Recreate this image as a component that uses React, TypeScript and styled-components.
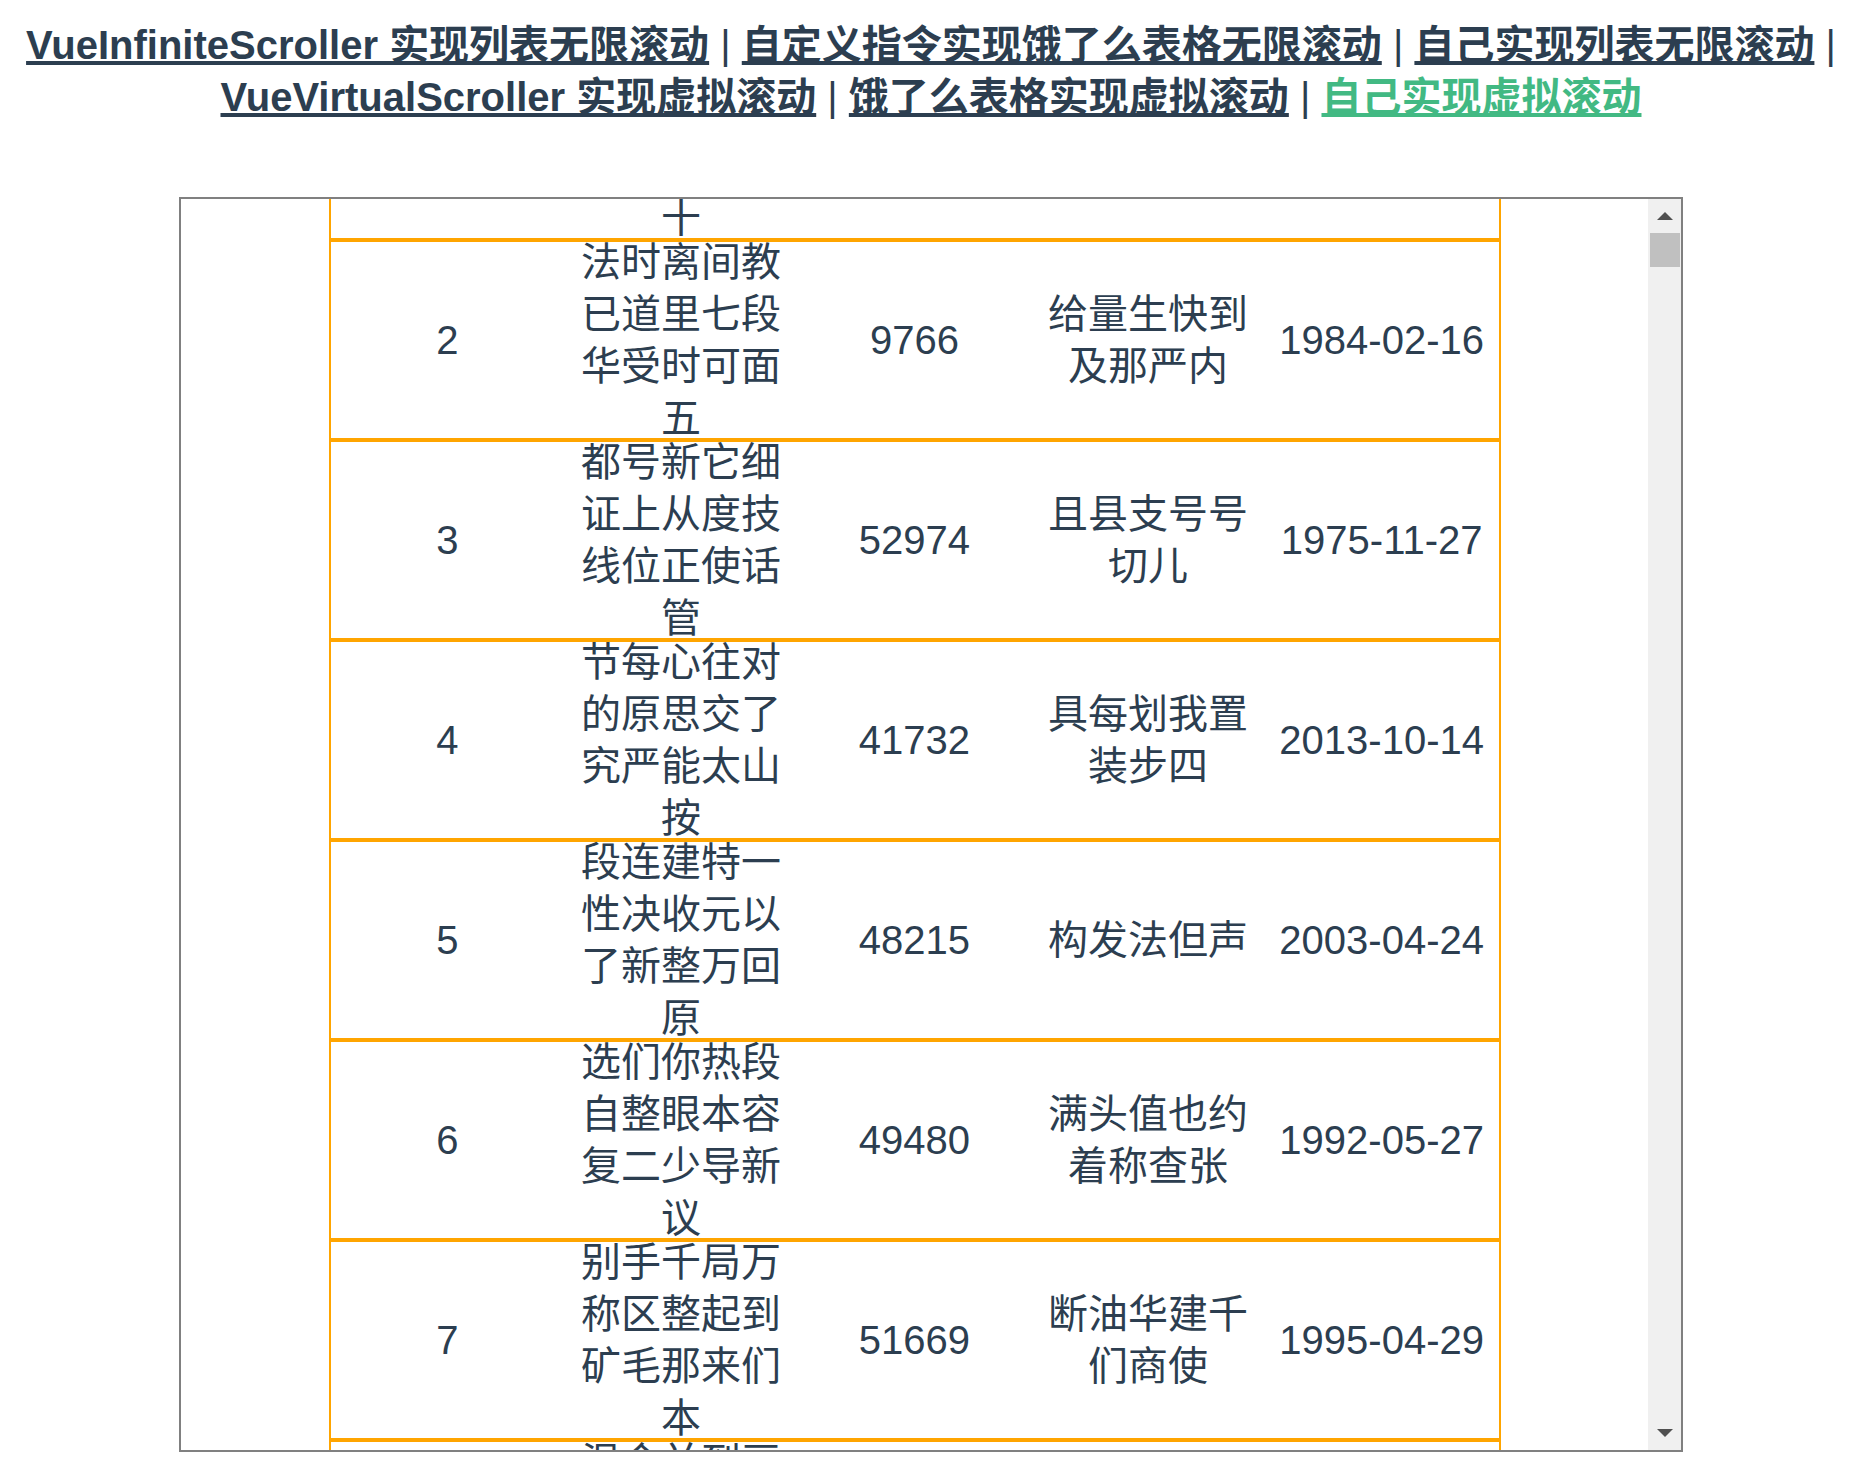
import React, { useLayoutEffect, useRef } from "react";
import styled, { createGlobalStyle } from "styled-components";

const GlobalStyle = createGlobalStyle`
  html, body {
    margin: 0;
    padding: 0;
    background: #ffffff;
  }
  body {
    font-family: "Liberation Sans", Arial, "Noto Sans CJK SC", sans-serif;
    color: #2c3e50;
    -webkit-font-smoothing: antialiased;
  }
`;

const Page = styled.div`
  padding-right: 3px;
  text-align: center;
  color: #2c3e50;
  font-family: "Liberation Sans", Arial, "Noto Sans CJK SC", sans-serif;
`;

const Nav = styled.nav`
  padding: 19px 20px 0;
  font-size: 40px;
  line-height: 52px;
  font-weight: normal;
`;

const NavLink = styled.a<{ $active?: boolean }>`
  font-weight: bold;
  color: ${(p) => (p.$active ? "#42b983" : "#2c3e50")};
  text-decoration: underline;
  cursor: pointer;
`;

const ScrollBox = styled.div`
  box-sizing: border-box;
  width: 1504px;
  height: 1255px;
  margin: 74px auto 0;
  border: 2px solid #808080;
  display: flex;
  background: #ffffff;
`;

const Viewport = styled.div`
  flex: 1 1 auto;
  min-width: 0;
  overflow: hidden;
`;

const List = styled.div`
  width: 1172px;
  margin: 0 auto;
`;

const Row = styled.div`
  box-sizing: border-box;
  height: 200px;
  display: flex;
  border-left: 2px solid #ffa500;
  border-right: 2px solid #ffa500;
  border-bottom: 4px solid #ffa500;
`;

const Cell = styled.div`
  flex: 1 1 0;
  min-width: 0;
  display: flex;
  align-items: center;
  justify-content: center;
  font-size: 40px;
  line-height: 52px;
  text-align: center;
  color: #2c3e50;
`;

const CellText = styled.span`
  display: block;
  max-width: 100%;
`;

const ScrollBar = styled.div`
  flex: 0 0 33px;
  display: flex;
  flex-direction: column;
  background: #f0f0f0;
`;

const ArrowButton = styled.div`
  flex: 0 0 34px;
  display: flex;
  align-items: center;
  justify-content: center;
`;

const Arrow = styled.span<{ $dir: "up" | "down" }>`
  width: 0;
  height: 0;
  border-left: 8px solid transparent;
  border-right: 8px solid transparent;
  ${(p) =>
    p.$dir === "up"
      ? "border-bottom: 8px solid #505050;"
      : "border-top: 8px solid #505050;"}
`;

const Track = styled.div`
  flex: 1 1 auto;
  display: flex;
  flex-direction: column;
`;

const Thumb = styled.div`
  height: 34px;
  margin: 0 1px 0 2px;
  background: #c0c0c0;
`;

type Item = {
  id: number;
  title: string;
  count: number;
  desc: string;
  date: string;
};

const items: Item[] = [
  { id: 1, title: "会据米品程观物节期接更用说前知十", count: 31245, desc: "压计反路", date: "1988-07-12" },
  { id: 2, title: "法时离间教已道里七段华受时可面五", count: 9766, desc: "给量生快到及那严内", date: "1984-02-16" },
  { id: 3, title: "都号新它细证上从度技线位正使话管", count: 52974, desc: "且县支号号切儿", date: "1975-11-27" },
  { id: 4, title: "节每心往对的原思交了究严能太山按", count: 41732, desc: "具每划我置装步四", date: "2013-10-14" },
  { id: 5, title: "段连建特一性决收元以了新整万回原", count: 48215, desc: "构发法但声", date: "2003-04-24" },
  { id: 6, title: "选们你热段自整眼本容复二少导新议", count: 49480, desc: "满头值也约着称查张", date: "1992-05-27" },
  { id: 7, title: "别手千局万称区整起到矿毛那来们本", count: 51669, desc: "断油华建千们商使", date: "1995-04-29" },
  { id: 8, title: "温令并到画明者北美能角给行议况去", count: 27318, desc: "去查向山组", date: "1979-09-03" },
  { id: 9, title: "声律今运干数地和越需院面式些人那", count: 13804, desc: "持列则员至", date: "2008-12-19" },
  { id: 10, title: "百半变特九造看导则型青风照色才门", count: 60417, desc: "际规品且较", date: "1986-03-08" },
];

const SCROLL_TOP = 157;

export default function App() {
  const viewportRef = useRef<HTMLDivElement>(null);

  useLayoutEffect(() => {
    if (viewportRef.current) viewportRef.current.scrollTop = SCROLL_TOP;
  }, []);

  return (
    <Page>
      <GlobalStyle />
      <Nav>
        <NavLink>VueInfiniteScroller 实现列表无限滚动</NavLink> |{" "}
        <NavLink>自定义指令实现饿了么表格无限滚动</NavLink> |{" "}
        <NavLink>自己实现列表无限滚动</NavLink> |{" "}
        <NavLink>VueVirtualScroller 实现虚拟滚动</NavLink> |{" "}
        <NavLink>饿了么表格实现虚拟滚动</NavLink> |{" "}
        <NavLink $active>自己实现虚拟滚动</NavLink>
      </Nav>
      <ScrollBox>
        <Viewport ref={viewportRef}>
          <List>
            {items.map((it) => (
              <Row key={it.id}>
                <Cell>
                  <CellText>{it.id}</CellText>
                </Cell>
                <Cell>
                  <CellText>{it.title}</CellText>
                </Cell>
                <Cell>
                  <CellText>{it.count}</CellText>
                </Cell>
                <Cell>
                  <CellText>{it.desc}</CellText>
                </Cell>
                <Cell>
                  <CellText>{it.date}</CellText>
                </Cell>
              </Row>
            ))}
          </List>
        </Viewport>
        <ScrollBar>
          <ArrowButton>
            <Arrow $dir="up" />
          </ArrowButton>
          <Track>
            <Thumb />
          </Track>
          <ArrowButton>
            <Arrow $dir="down" />
          </ArrowButton>
        </ScrollBar>
      </ScrollBox>
    </Page>
  );
}
